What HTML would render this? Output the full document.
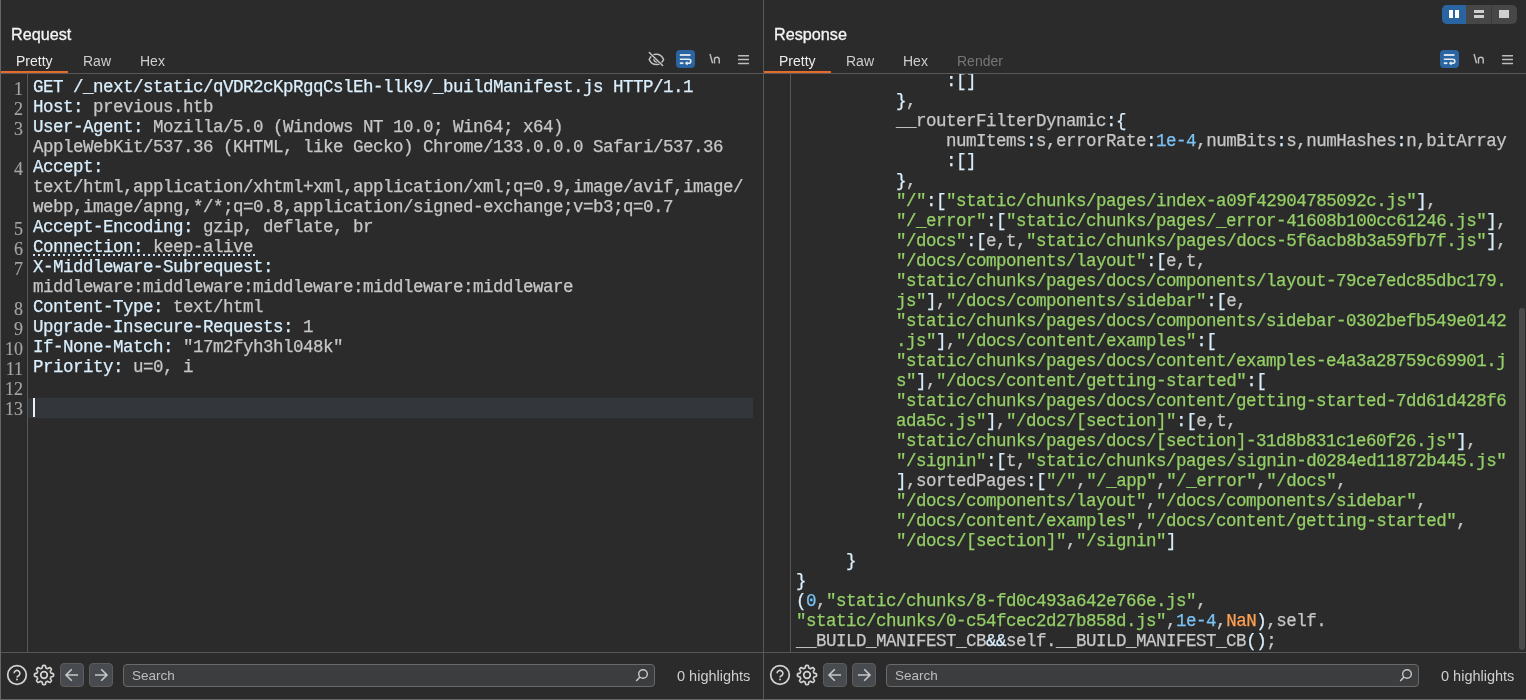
<!DOCTYPE html><html><head><meta charset="utf-8"><style>
*{box-sizing:border-box}
html,body{margin:0;padding:0}
body{width:1526px;height:700px;overflow:hidden;background:#2b2b2b;position:relative;font-family:"Liberation Sans",sans-serif}
.a{position:absolute}
.code,.num{-webkit-font-smoothing:antialiased;will-change:transform;-webkit-text-stroke:0.25px currentColor}
.ui{-webkit-font-smoothing:antialiased;will-change:transform}
.code{font-family:"Liberation Mono",monospace;font-size:17.5px;letter-spacing:-0.5px;line-height:20px;white-space:pre;height:20px}
.hn{color:#daeefc} .hv{color:#c6c6c6} .str{color:#93cf66} .nb{color:#7ac1f4} .nan{color:#fea052} .pun{color:#daeefc} .cm{color:#c6c6c6}
.num{font-family:"Liberation Serif",serif;font-size:18px;line-height:20px;color:#a4a4a4;text-align:right;width:23px;-webkit-text-stroke:0.15px currentColor;height:20px}
.title{font-size:16.2px;color:#f4f4f4;line-height:20px;-webkit-text-stroke:0.3px currentColor}
.tab{font-size:14px;color:#d8d8d8;line-height:18px}
.hl{font-size:14.5px;color:#cfcfcf;line-height:18px}
.sbox{background:#3c3d3f;border:1px solid #6a6a6a;border-radius:4px}
.btn{background:#474a4e;border:1px solid #5c5c5c;border-radius:4px}
</style></head><body><div class="a" style="left:0;top:0;width:1px;height:700px;background:#666"></div>
<div class="a" style="left:0;top:699px;width:1526px;height:1px;background:#666"></div>
<div class="a" style="left:763px;top:0;width:1px;height:699px;background:#585858"></div>
<div class="a" style="left:1442px;top:5px;width:75px;height:19px;border-radius:5px;background:#474747;overflow:hidden"><div class="a" style="left:0;top:0;width:24px;height:19px;background:#2a65a1"></div><div class="a" style="left:49px;top:0;width:1px;height:19px;background:#3a3a3a"></div><div class="a" style="left:7px;top:5px;width:4px;height:8px;background:#fff"></div><div class="a" style="left:13px;top:5px;width:4px;height:8px;background:#fff"></div><div class="a" style="left:32px;top:5px;width:10px;height:3px;background:#cfcfcf"></div><div class="a" style="left:32px;top:10px;width:10px;height:3px;background:#cfcfcf"></div><div class="a" style="left:57px;top:5px;width:10px;height:8px;background:#cfcfcf"></div></div>
<div class="a title ui" style="left:11px;top:24px">Request</div>
<div class="a tab ui" style="left:16px;top:52px;color:#ececec">Pretty</div>
<div class="a tab ui" style="left:83px;top:52px;color:#cdcdcd">Raw</div>
<div class="a tab ui" style="left:140px;top:52px;color:#cdcdcd">Hex</div>
<div class="a" style="left:1px;top:71px;width:67px;height:2px;background:#e8692c"></div>
<div class="a" style="left:1px;top:73px;width:762px;height:1px;background:#585858"></div>
<div class="a" style="left:27px;top:74px;width:1px;height:578px;background:#575757"></div>
<div class="a" style="left:1px;top:652px;width:762px;height:1px;background:#585858"></div>
<div class="a" style="left:28px;top:398px;width:725px;height:20px;background:#33373b"></div>
<div class="a" style="left:33px;top:398px;width:2px;height:19px;background:#f0f0f0"></div>
<div class="a num" style="left:0px;top:79px">1</div>
<div class="a code" style="left:33px;top:77px"><span class="hn">GET /_next/static/qVDR2cKpRgqCslEh-llk9/_buildManifest.js HTTP/1.1</span></div>
<div class="a num" style="left:0px;top:99px">2</div>
<div class="a code" style="left:33px;top:97px"><span class="hn">Host:</span><span class="hv"> previous.htb</span></div>
<div class="a num" style="left:0px;top:119px">3</div>
<div class="a code" style="left:33px;top:117px"><span class="hn">User-Agent:</span><span class="hv"> Mozilla/5.0 (Windows NT 10.0; Win64; x64)</span></div>
<div class="a code" style="left:33px;top:137px"><span class="hv">AppleWebKit/537.36 (KHTML, like Gecko) Chrome/133.0.0.0 Safari/537.36</span></div>
<div class="a num" style="left:0px;top:159px">4</div>
<div class="a code" style="left:33px;top:157px"><span class="hn">Accept:</span></div>
<div class="a code" style="left:33px;top:177px"><span class="hv">text/html,application/xhtml+xml,application/xml;q=0.9,image/avif,image/</span></div>
<div class="a code" style="left:33px;top:197px"><span class="hv">webp,image/apng,*/*;q=0.8,application/signed-exchange;v=b3;q=0.7</span></div>
<div class="a num" style="left:0px;top:219px">5</div>
<div class="a code" style="left:33px;top:217px"><span class="hn">Accept-Encoding:</span><span class="hv"> gzip, deflate, br</span></div>
<div class="a num" style="left:0px;top:239px">6</div>
<div class="a code" style="left:33px;top:237px"><span class="hn">Connection:</span><span class="hv"> keep-alive</span></div>
<div class="a num" style="left:0px;top:259px">7</div>
<div class="a code" style="left:33px;top:257px"><span class="hn">X-Middleware-Subrequest:</span></div>
<div class="a code" style="left:33px;top:277px"><span class="hv">middleware:middleware:middleware:middleware:middleware</span></div>
<div class="a num" style="left:0px;top:299px">8</div>
<div class="a code" style="left:33px;top:297px"><span class="hn">Content-Type:</span><span class="hv"> text/html</span></div>
<div class="a num" style="left:0px;top:319px">9</div>
<div class="a code" style="left:33px;top:317px"><span class="hn">Upgrade-Insecure-Requests:</span><span class="hv"> 1</span></div>
<div class="a num" style="left:0px;top:339px">10</div>
<div class="a code" style="left:33px;top:337px"><span class="hn">If-None-Match:</span><span class="hv"> &quot;17m2fyh3hl048k&quot;</span></div>
<div class="a num" style="left:0px;top:359px">11</div>
<div class="a code" style="left:33px;top:357px"><span class="hn">Priority:</span><span class="hv"> u=0, i</span></div>
<div class="a num" style="left:0px;top:379px">12</div>
<div class="a code" style="left:33px;top:377px"></div>
<div class="a num" style="left:0px;top:399px">13</div>
<div class="a code" style="left:33px;top:397px"></div>
<div class="a" style="left:33px;top:254px;width:223px;height:2px;background:repeating-linear-gradient(90deg,#cfe3f5 0 2px,transparent 2px 5px)"></div>
<div class="a title ui" style="left:774px;top:24px">Response</div>
<div class="a tab ui" style="left:779px;top:52px;color:#ececec">Pretty</div>
<div class="a tab ui" style="left:846px;top:52px;color:#cdcdcd">Raw</div>
<div class="a tab ui" style="left:903px;top:52px;color:#cdcdcd">Hex</div>
<div class="a tab ui" style="left:957px;top:52px;color:#767676">Render</div>
<div class="a" style="left:764px;top:71px;width:67px;height:2px;background:#e8692c"></div>
<div class="a" style="left:764px;top:73px;width:762px;height:1px;background:#585858"></div>
<div class="a" style="left:790px;top:74px;width:1px;height:578px;background:#575757"></div>
<div class="a" style="left:764px;top:652px;width:762px;height:1px;background:#585858"></div>
<div class="a" style="left:1519px;top:308px;width:6px;height:342px;border-radius:3px;background:#4a4a4a"></div>
<div class="a" style="left:791px;top:74px;width:728px;height:578px;overflow:hidden">
<div class="a code" style="left:5px;top:-3px">               <span class="pun">:</span><span class="pun">[</span><span class="pun">]</span></div>
<div class="a code" style="left:5px;top:17px">          <span class="pun">}</span><span class="cm">,</span></div>
<div class="a code" style="left:5px;top:37px">          <span class="cm">__routerFilterDynamic</span><span class="pun">:</span><span class="pun">{</span></div>
<div class="a code" style="left:5px;top:57px">               <span class="cm">numItems</span><span class="pun">:</span><span class="cm">s,errorRate</span><span class="pun">:</span><span class="nb">1e-4</span><span class="cm">,numBits</span><span class="pun">:</span><span class="cm">s,numHashes</span><span class="pun">:</span><span class="cm">n,bitArray</span></div>
<div class="a code" style="left:5px;top:77px">               <span class="pun">:</span><span class="pun">[</span><span class="pun">]</span></div>
<div class="a code" style="left:5px;top:97px">          <span class="pun">}</span><span class="cm">,</span></div>
<div class="a code" style="left:5px;top:117px">          <span class="str">&quot;/&quot;</span><span class="pun">:</span><span class="pun">[</span><span class="str">&quot;static/chunks/pages/index-a09f42904785092c.js&quot;</span><span class="pun">]</span><span class="cm">,</span></div>
<div class="a code" style="left:5px;top:137px">          <span class="str">&quot;/_error&quot;</span><span class="pun">:</span><span class="pun">[</span><span class="str">&quot;static/chunks/pages/_error-41608b100cc61246.js&quot;</span><span class="pun">]</span><span class="cm">,</span></div>
<div class="a code" style="left:5px;top:157px">          <span class="str">&quot;/docs&quot;</span><span class="pun">:</span><span class="pun">[</span><span class="cm">e,t,</span><span class="str">&quot;static/chunks/pages/docs-5f6acb8b3a59fb7f.js&quot;</span><span class="pun">]</span><span class="cm">,</span></div>
<div class="a code" style="left:5px;top:177px">          <span class="str">&quot;/docs/components/layout&quot;</span><span class="pun">:</span><span class="pun">[</span><span class="cm">e,t,</span></div>
<div class="a code" style="left:5px;top:197px">          <span class="str">&quot;static/chunks/pages/docs/components/layout-79ce7edc85dbc179.</span></div>
<div class="a code" style="left:5px;top:217px">          <span class="str">js&quot;</span><span class="pun">]</span><span class="cm">,</span><span class="str">&quot;/docs/components/sidebar&quot;</span><span class="pun">:</span><span class="pun">[</span><span class="cm">e,</span></div>
<div class="a code" style="left:5px;top:237px">          <span class="str">&quot;static/chunks/pages/docs/components/sidebar-0302befb549e0142</span></div>
<div class="a code" style="left:5px;top:257px">          <span class="str">.js&quot;</span><span class="pun">]</span><span class="cm">,</span><span class="str">&quot;/docs/content/examples&quot;</span><span class="pun">:</span><span class="pun">[</span></div>
<div class="a code" style="left:5px;top:277px">          <span class="str">&quot;static/chunks/pages/docs/content/examples-e4a3a28759c69901.j</span></div>
<div class="a code" style="left:5px;top:297px">          <span class="str">s&quot;</span><span class="pun">]</span><span class="cm">,</span><span class="str">&quot;/docs/content/getting-started&quot;</span><span class="pun">:</span><span class="pun">[</span></div>
<div class="a code" style="left:5px;top:317px">          <span class="str">&quot;static/chunks/pages/docs/content/getting-started-7dd61d428f6</span></div>
<div class="a code" style="left:5px;top:337px">          <span class="str">ada5c.js&quot;</span><span class="pun">]</span><span class="cm">,</span><span class="str">&quot;/docs/[section]&quot;</span><span class="pun">:</span><span class="pun">[</span><span class="cm">e,t,</span></div>
<div class="a code" style="left:5px;top:357px">          <span class="str">&quot;static/chunks/pages/docs/[section]-31d8b831c1e60f26.js&quot;</span><span class="pun">]</span><span class="cm">,</span></div>
<div class="a code" style="left:5px;top:377px">          <span class="str">&quot;/signin&quot;</span><span class="pun">:</span><span class="pun">[</span><span class="cm">t,</span><span class="str">&quot;static/chunks/pages/signin-d0284ed11872b445.js&quot;</span></div>
<div class="a code" style="left:5px;top:397px">          <span class="pun">]</span><span class="cm">,sortedPages</span><span class="pun">:</span><span class="pun">[</span><span class="str">&quot;/&quot;</span><span class="cm">,</span><span class="str">&quot;/_app&quot;</span><span class="cm">,</span><span class="str">&quot;/_error&quot;</span><span class="cm">,</span><span class="str">&quot;/docs&quot;</span><span class="cm">,</span></div>
<div class="a code" style="left:5px;top:417px">          <span class="str">&quot;/docs/components/layout&quot;</span><span class="cm">,</span><span class="str">&quot;/docs/components/sidebar&quot;</span><span class="cm">,</span></div>
<div class="a code" style="left:5px;top:437px">          <span class="str">&quot;/docs/content/examples&quot;</span><span class="cm">,</span><span class="str">&quot;/docs/content/getting-started&quot;</span><span class="cm">,</span></div>
<div class="a code" style="left:5px;top:457px">          <span class="str">&quot;/docs/[section]&quot;</span><span class="cm">,</span><span class="str">&quot;/signin&quot;</span><span class="pun">]</span></div>
<div class="a code" style="left:5px;top:477px">     <span class="pun">}</span></div>
<div class="a code" style="left:5px;top:497px"><span class="pun">}</span></div>
<div class="a code" style="left:5px;top:517px"><span class="pun">(</span><span class="nb">0</span><span class="cm">,</span><span class="str">&quot;static/chunks/8-fd0c493a642e766e.js&quot;</span><span class="cm">,</span></div>
<div class="a code" style="left:5px;top:537px"><span class="str">&quot;static/chunks/0-c54fcec2d27b858d.js&quot;</span><span class="cm">,</span><span class="nb">1e-4</span><span class="cm">,</span><span class="nan">NaN</span><span class="pun">)</span><span class="cm">,self.</span></div>
<div class="a code" style="left:5px;top:557px"><span class="cm">__BUILD_MANIFEST_CB</span><span class="pun">&amp;</span><span class="pun">&amp;</span><span class="cm">self.__BUILD_MANIFEST_CB</span><span class="pun">(</span><span class="pun">)</span><span class="cm">;</span></div>
</div>
<svg class="a" style="left:645px;top:48px" width="22" height="22" viewBox="0 0 22 22"><path d="M4.2 11.5 C5.6 8.2 8.4 6.3 11.4 6.3 C14.4 6.3 17.2 8.2 18.6 11.5 C17.2 14.8 14.4 16.6 11.4 16.6 C8.4 16.6 5.6 14.8 4.2 11.5 Z" fill="none" stroke="#c4c4c4" stroke-width="1.5" stroke-linejoin="round"/><path d="M9.6 9.9 A2.5 2.5 0 0 0 13.1 13.4" fill="none" stroke="#c4c4c4" stroke-width="1.5"/><path d="M4.3 4.5 L17.6 17.5" stroke="#2b2b2b" stroke-width="2.8"/><path d="M4.3 4.5 L17.6 17.5" stroke="#c4c4c4" stroke-width="1.5" stroke-linecap="round"/></svg>
<div class="a" style="left:676px;top:50px;width:19px;height:18px;border-radius:4px;background:#2a65a1"></div><svg class="a" style="left:676px;top:50px" width="19" height="18" viewBox="0 0 19 18"><path d="M3.8 5 H14.5" stroke="#e4ecf4" stroke-width="1.8"/><path d="M3.8 9.2 H12.8 A2 2 0 0 1 12.8 13.2 H10.4" fill="none" stroke="#e4ecf4" stroke-width="1.6"/><path d="M11.5 11.7 L9.9 13.2 L11.5 14.7" fill="none" stroke="#e4ecf4" stroke-width="1.4"/><path d="M3.8 13.2 H7.4" stroke="#e4ecf4" stroke-width="1.8"/></svg>
<svg class="a" style="left:708px;top:53px" width="14" height="14" viewBox="0 0 14 14"><path d="M2 1 L4.6 10.3" stroke="#c0c0c0" stroke-width="1.4"/><path d="M6.5 10.5 V4.5 M6.5 6 C7 4.5 8.2 4.2 9 4.2 C10.6 4.2 11.2 5.2 11.2 6.6 V10.5" fill="none" stroke="#c0c0c0" stroke-width="1.4"/></svg>
<svg class="a" style="left:737px;top:53px" width="12" height="12" viewBox="0 0 12 12"><path d="M1.6 2.7H11.5M1.6 6.5H11.5M1.6 10.4H11.5" stroke="#bdbdbd" stroke-width="1.5" stroke-linecap="round"/></svg>
<div class="a" style="left:1440px;top:50px;width:19px;height:18px;border-radius:4px;background:#2a65a1"></div><svg class="a" style="left:1440px;top:50px" width="19" height="18" viewBox="0 0 19 18"><path d="M3.8 5 H14.5" stroke="#e4ecf4" stroke-width="1.8"/><path d="M3.8 9.2 H12.8 A2 2 0 0 1 12.8 13.2 H10.4" fill="none" stroke="#e4ecf4" stroke-width="1.6"/><path d="M11.5 11.7 L9.9 13.2 L11.5 14.7" fill="none" stroke="#e4ecf4" stroke-width="1.4"/><path d="M3.8 13.2 H7.4" stroke="#e4ecf4" stroke-width="1.8"/></svg>
<svg class="a" style="left:1472px;top:53px" width="14" height="14" viewBox="0 0 14 14"><path d="M2 1 L4.6 10.3" stroke="#c0c0c0" stroke-width="1.4"/><path d="M6.5 10.5 V4.5 M6.5 6 C7 4.5 8.2 4.2 9 4.2 C10.6 4.2 11.2 5.2 11.2 6.6 V10.5" fill="none" stroke="#c0c0c0" stroke-width="1.4"/></svg>
<svg class="a" style="left:1501px;top:53px" width="12" height="12" viewBox="0 0 12 12"><path d="M1.6 2.7H11.5M1.6 6.5H11.5M1.6 10.4H11.5" stroke="#bdbdbd" stroke-width="1.5" stroke-linecap="round"/></svg>
<svg class="a" style="left:6px;top:664px" width="22" height="22" viewBox="0 0 22 22"><circle cx="11" cy="11" r="9.3" fill="none" stroke="#d4d4d4" stroke-width="1.7"/><path d="M8.1 9.3 A2.9 2.9 0 1 1 12.86 11.52 Q11 12.4 11 13.5" fill="none" stroke="#d4d4d4" stroke-width="1.6"/><circle cx="11" cy="15.5" r="0.95" fill="#d4d4d4"/></svg>
<svg class="a" style="left:33px;top:664px" width="22" height="22" viewBox="0 0 22 22"><path d="M11.00 1.45 L11.37 1.46 L11.75 1.52 L12.11 1.66 L12.42 2.03 L12.63 2.81 L12.78 3.59 L12.98 3.98 L13.22 4.16 L13.48 4.29 L13.74 4.39 L14.00 4.50 L14.26 4.60 L14.56 4.64 L14.98 4.50 L15.64 4.06 L16.34 3.66 L16.82 3.61 L17.18 3.77 L17.48 3.99 L17.75 4.25 L18.01 4.52 L18.23 4.82 L18.39 5.18 L18.34 5.66 L17.94 6.36 L17.50 7.02 L17.36 7.44 L17.40 7.74 L17.50 8.00 L17.61 8.26 L17.71 8.52 L17.84 8.78 L18.02 9.02 L18.41 9.22 L19.19 9.37 L19.97 9.58 L20.34 9.89 L20.48 10.25 L20.54 10.63 L20.55 11.00 L20.54 11.37 L20.48 11.75 L20.34 12.11 L19.97 12.42 L19.19 12.63 L18.41 12.78 L18.02 12.98 L17.84 13.22 L17.71 13.48 L17.61 13.74 L17.50 14.00 L17.40 14.26 L17.36 14.56 L17.50 14.98 L17.94 15.64 L18.34 16.34 L18.39 16.82 L18.23 17.18 L18.01 17.48 L17.75 17.75 L17.48 18.01 L17.18 18.23 L16.82 18.39 L16.34 18.34 L15.64 17.94 L14.98 17.50 L14.56 17.36 L14.26 17.40 L14.00 17.50 L13.74 17.61 L13.48 17.71 L13.22 17.84 L12.98 18.02 L12.78 18.41 L12.63 19.19 L12.42 19.97 L12.11 20.34 L11.75 20.48 L11.37 20.54 L11.00 20.55 L10.63 20.54 L10.25 20.48 L9.89 20.34 L9.58 19.97 L9.37 19.19 L9.22 18.41 L9.02 18.02 L8.78 17.84 L8.52 17.71 L8.26 17.61 L8.00 17.50 L7.74 17.40 L7.44 17.36 L7.02 17.50 L6.36 17.94 L5.66 18.34 L5.18 18.39 L4.82 18.23 L4.52 18.01 L4.25 17.75 L3.99 17.48 L3.77 17.18 L3.61 16.82 L3.66 16.34 L4.06 15.64 L4.50 14.98 L4.64 14.56 L4.60 14.26 L4.50 14.00 L4.39 13.74 L4.29 13.48 L4.16 13.22 L3.98 12.98 L3.59 12.78 L2.81 12.63 L2.03 12.42 L1.66 12.11 L1.52 11.75 L1.46 11.37 L1.45 11.00 L1.46 10.63 L1.52 10.25 L1.66 9.89 L2.03 9.58 L2.81 9.37 L3.59 9.22 L3.98 9.02 L4.16 8.78 L4.29 8.52 L4.39 8.26 L4.50 8.00 L4.60 7.74 L4.64 7.44 L4.50 7.02 L4.06 6.36 L3.66 5.66 L3.61 5.18 L3.77 4.82 L3.99 4.52 L4.25 4.25 L4.52 3.99 L4.82 3.77 L5.18 3.61 L5.66 3.66 L6.36 4.06 L7.02 4.50 L7.44 4.64 L7.74 4.60 L8.00 4.50 L8.26 4.39 L8.52 4.29 L8.78 4.16 L9.02 3.98 L9.22 3.59 L9.37 2.81 L9.58 2.03 L9.89 1.66 L10.25 1.52 L10.63 1.46 Z" fill="none" stroke="#d4d4d4" stroke-width="1.7" stroke-linejoin="round"/><circle cx="11" cy="11" r="3.3" fill="none" stroke="#d4d4d4" stroke-width="1.7"/></svg>
<div class="a btn" style="left:60px;top:663px;width:24px;height:24px"></div><svg class="a" style="left:60px;top:663px" width="24" height="24" viewBox="0 0 24 24"><path d="M6.2 12 H18 M11.8 6.2 L6 12 L11.8 17.8" fill="none" stroke="#c8c8c8" stroke-width="1.6"/></svg>
<div class="a btn" style="left:89px;top:663px;width:24px;height:24px"></div><svg class="a" style="left:89px;top:663px" width="24" height="24" viewBox="0 0 24 24"><path d="M6 12 H17.8 M12.2 6.2 L18 12 L12.2 17.8" fill="none" stroke="#c8c8c8" stroke-width="1.6"/></svg>
<svg class="a" style="left:769px;top:664px" width="22" height="22" viewBox="0 0 22 22"><circle cx="11" cy="11" r="9.3" fill="none" stroke="#d4d4d4" stroke-width="1.7"/><path d="M8.1 9.3 A2.9 2.9 0 1 1 12.86 11.52 Q11 12.4 11 13.5" fill="none" stroke="#d4d4d4" stroke-width="1.6"/><circle cx="11" cy="15.5" r="0.95" fill="#d4d4d4"/></svg>
<svg class="a" style="left:796px;top:664px" width="22" height="22" viewBox="0 0 22 22"><path d="M11.00 1.45 L11.37 1.46 L11.75 1.52 L12.11 1.66 L12.42 2.03 L12.63 2.81 L12.78 3.59 L12.98 3.98 L13.22 4.16 L13.48 4.29 L13.74 4.39 L14.00 4.50 L14.26 4.60 L14.56 4.64 L14.98 4.50 L15.64 4.06 L16.34 3.66 L16.82 3.61 L17.18 3.77 L17.48 3.99 L17.75 4.25 L18.01 4.52 L18.23 4.82 L18.39 5.18 L18.34 5.66 L17.94 6.36 L17.50 7.02 L17.36 7.44 L17.40 7.74 L17.50 8.00 L17.61 8.26 L17.71 8.52 L17.84 8.78 L18.02 9.02 L18.41 9.22 L19.19 9.37 L19.97 9.58 L20.34 9.89 L20.48 10.25 L20.54 10.63 L20.55 11.00 L20.54 11.37 L20.48 11.75 L20.34 12.11 L19.97 12.42 L19.19 12.63 L18.41 12.78 L18.02 12.98 L17.84 13.22 L17.71 13.48 L17.61 13.74 L17.50 14.00 L17.40 14.26 L17.36 14.56 L17.50 14.98 L17.94 15.64 L18.34 16.34 L18.39 16.82 L18.23 17.18 L18.01 17.48 L17.75 17.75 L17.48 18.01 L17.18 18.23 L16.82 18.39 L16.34 18.34 L15.64 17.94 L14.98 17.50 L14.56 17.36 L14.26 17.40 L14.00 17.50 L13.74 17.61 L13.48 17.71 L13.22 17.84 L12.98 18.02 L12.78 18.41 L12.63 19.19 L12.42 19.97 L12.11 20.34 L11.75 20.48 L11.37 20.54 L11.00 20.55 L10.63 20.54 L10.25 20.48 L9.89 20.34 L9.58 19.97 L9.37 19.19 L9.22 18.41 L9.02 18.02 L8.78 17.84 L8.52 17.71 L8.26 17.61 L8.00 17.50 L7.74 17.40 L7.44 17.36 L7.02 17.50 L6.36 17.94 L5.66 18.34 L5.18 18.39 L4.82 18.23 L4.52 18.01 L4.25 17.75 L3.99 17.48 L3.77 17.18 L3.61 16.82 L3.66 16.34 L4.06 15.64 L4.50 14.98 L4.64 14.56 L4.60 14.26 L4.50 14.00 L4.39 13.74 L4.29 13.48 L4.16 13.22 L3.98 12.98 L3.59 12.78 L2.81 12.63 L2.03 12.42 L1.66 12.11 L1.52 11.75 L1.46 11.37 L1.45 11.00 L1.46 10.63 L1.52 10.25 L1.66 9.89 L2.03 9.58 L2.81 9.37 L3.59 9.22 L3.98 9.02 L4.16 8.78 L4.29 8.52 L4.39 8.26 L4.50 8.00 L4.60 7.74 L4.64 7.44 L4.50 7.02 L4.06 6.36 L3.66 5.66 L3.61 5.18 L3.77 4.82 L3.99 4.52 L4.25 4.25 L4.52 3.99 L4.82 3.77 L5.18 3.61 L5.66 3.66 L6.36 4.06 L7.02 4.50 L7.44 4.64 L7.74 4.60 L8.00 4.50 L8.26 4.39 L8.52 4.29 L8.78 4.16 L9.02 3.98 L9.22 3.59 L9.37 2.81 L9.58 2.03 L9.89 1.66 L10.25 1.52 L10.63 1.46 Z" fill="none" stroke="#d4d4d4" stroke-width="1.7" stroke-linejoin="round"/><circle cx="11" cy="11" r="3.3" fill="none" stroke="#d4d4d4" stroke-width="1.7"/></svg>
<div class="a btn" style="left:823px;top:663px;width:24px;height:24px"></div><svg class="a" style="left:823px;top:663px" width="24" height="24" viewBox="0 0 24 24"><path d="M6.2 12 H18 M11.8 6.2 L6 12 L11.8 17.8" fill="none" stroke="#c8c8c8" stroke-width="1.6"/></svg>
<div class="a btn" style="left:852px;top:663px;width:24px;height:24px"></div><svg class="a" style="left:852px;top:663px" width="24" height="24" viewBox="0 0 24 24"><path d="M6 12 H17.8 M12.2 6.2 L18 12 L12.2 17.8" fill="none" stroke="#c8c8c8" stroke-width="1.6"/></svg>
<div class="a sbox" style="left:123px;top:664px;width:532px;height:23px"></div><div class="a ui" style="left:132px;top:667px;font-size:13.5px;line-height:18px;color:#bdbdbd">Search</div><svg class="a" style="left:634px;top:666px" width="16" height="18" viewBox="0 0 16 18"><circle cx="9" cy="8" r="4.3" fill="none" stroke="#c8c8c8" stroke-width="1.4"/><path d="M6 11 L2.2 15" stroke="#c8c8c8" stroke-width="1.5"/></svg>
<div class="a sbox" style="left:886px;top:664px;width:533px;height:23px"></div><div class="a ui" style="left:895px;top:667px;font-size:13.5px;line-height:18px;color:#bdbdbd">Search</div><svg class="a" style="left:1398px;top:666px" width="16" height="18" viewBox="0 0 16 18"><circle cx="9" cy="8" r="4.3" fill="none" stroke="#c8c8c8" stroke-width="1.4"/><path d="M6 11 L2.2 15" stroke="#c8c8c8" stroke-width="1.5"/></svg>
<div class="a hl ui" style="left:677px;top:667px">0 highlights</div>
<div class="a hl ui" style="left:1441px;top:667px">0 highlights</div></body></html>
